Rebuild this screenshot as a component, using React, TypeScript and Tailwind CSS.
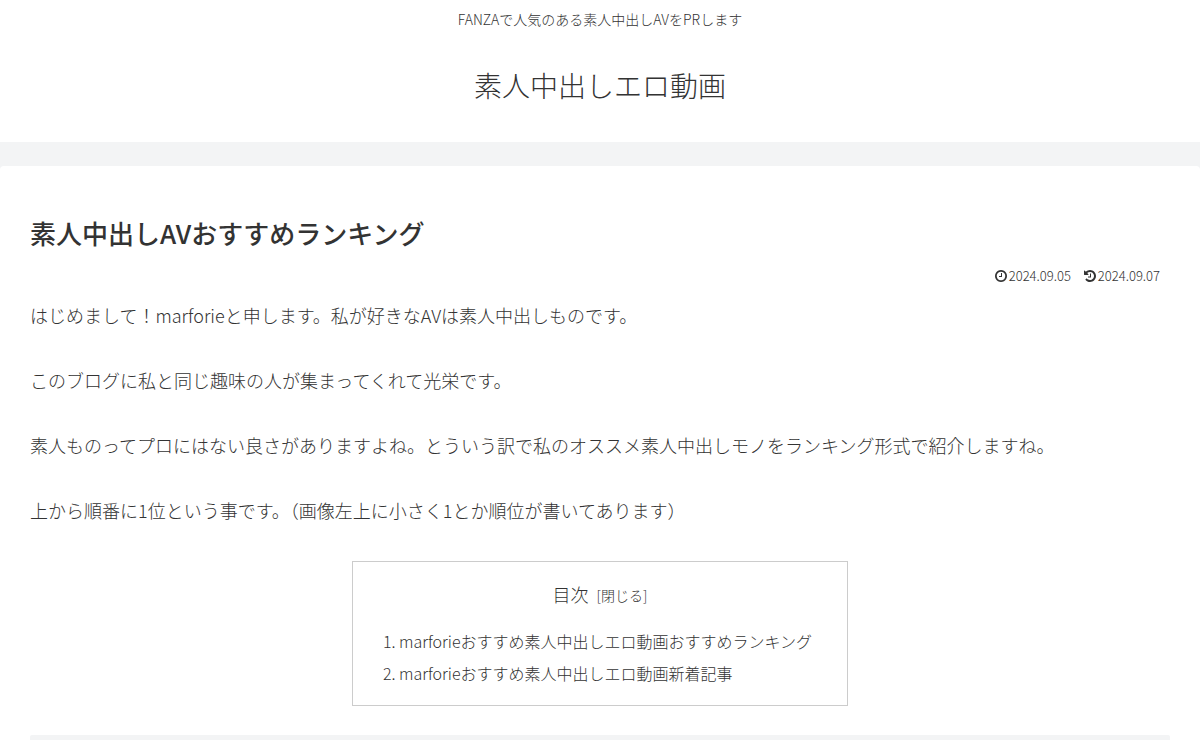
import type { ReactNode } from 'react';
import { useState } from 'react';

const paragraphs = [
  'はじめまして！marforieと申します。私が好きなAVは素人中出しものです。',
  'このブログに私と同じ趣味の人が集まってくれて光栄です。',
  '素人ものってプロにはない良さがありますよね。とういう訳で私のオススメ素人中出しモノをランキング形式で紹介しますね。',
  '上から順番に1位という事です。（画像左上に小さく1とか順位が書いてあります）',
];

const tocItems = [
  { href: '#toc1', label: 'marforieおすすめ素人中出しエロ動画おすすめランキング' },
  { href: '#toc2', label: 'marforieおすすめ素人中出しエロ動画新着記事' },
];

const Icon = ({ children }: { children: ReactNode }) => (
  <svg viewBox="0 0 1792 1792" className="size-[14px] fill-current" aria-hidden="true">
    {children}
  </svg>
);

const ClockIcon = () => (
  <Icon>
    <path d="M1024 544v448q0 14-9 23t-23 9h-320q-14 0-23-9t-9-23v-64q0-14 9-23t23-9h224v-352q0-14 9-23t23-9h64q14 0 23 9t9 23zm416 352q0-148-73-273t-198-198-273-73-273 73-198 198-73 273 73 273 198 198 273 73 273-73 198-198 73-273zm224 0q0 209-103 385.5t-279.5 279.5-385.5 103-385.5-103-279.5-279.5-103-385.5 103-385.5 279.5-279.5 385.5-103 385.5 103 279.5 279.5 103 385.5z" />
  </Icon>
);

const HistoryIcon = () => (
  <Icon>
    <path d="M1664 896q0 156-61 298t-164 245-245 164-298 61q-172 0-327-72.5t-264-204.5q-7-10-6.5-22.5t8.5-20.5l137-138q10-9 25-9 16 2 23 12 73 95 179 147t225 52q104 0 198.5-40.5t163.5-109.5 109.5-163.5 40.5-198.5-40.5-198.5-109.5-163.5-163.5-109.5-198.5-40.5q-98 0-188 35.5t-160 101.5l137 138q31 30 14 69-17 40-59 40h-448q-26 0-45-19t-19-45v-448q0-42 40-59 39-17 69 14l130 129q107-101 244.5-156.5t284.5-55.5q156 0 298 61t245 164 164 245 61 298zm-640-288v448q0 14-9 23t-23 9h-320q-14 0-23-9t-9-23v-64q0-14 9-23t23-9h224v-352q0-14 9-23t23-9h64q14 0 23 9t9 23z" />
  </Icon>
);

const Header = () => (
  <header className="bg-white pt-[7px] pb-8 text-center">
    <p className="text-sm leading-6">FANZAで人気のある素人中出しAVをPRします</p>
    <div className="mt-[29px] text-[28px] leading-[50px]">
      <a href="#top">素人中出しエロ動画</a>
    </div>
  </header>
);

const Toc = () => {
  const [open, setOpen] = useState(true);

  return (
    <nav aria-label="目次" className="mx-auto w-[496px] max-w-full border border-[#ccc] px-7 pt-4 pb-4">
      <div className="flex items-center justify-center gap-2 text-lg leading-[33px]">
        目次
        <button type="button" className="text-sm" aria-expanded={open} onClick={() => setOpen(!open)}>
          [{open ? '閉じる' : '開く'}]
        </button>
      </div>
      {open && (
        <ol className="mt-[14px] list-decimal pl-[18px] text-base leading-8">
          {tocItems.map((item) => (
            <li key={item.href}>
              <a href={item.href}>{item.label}</a>
            </li>
          ))}
        </ol>
      )}
    </nav>
  );
};

export default function App() {
  return (
    <div
      id="top"
      className="min-h-screen bg-[#f3f4f5] font-['Noto_Sans_CJK_JP',sans-serif] font-light text-[#333]"
    >
      <Header />
      <main className="mt-6 rounded-t bg-white px-[30px] pt-[47px]">
        <article>
          <h1 className="text-[26px] leading-10 font-medium">素人中出しAVおすすめランキング</h1>
          <div className="flex justify-end gap-3 pt-[13px] pr-[10px] text-[13px] leading-5">
            <span className="flex items-center gap-px">
              <ClockIcon />
              <time dateTime="2024-09-05">2024.09.05</time>
            </span>
            <span className="flex items-center gap-px">
              <HistoryIcon />
              <time dateTime="2024-09-07">2024.09.07</time>
            </span>
          </div>
          <div className="space-y-8 pt-[13px] pb-[34px] text-lg leading-[33px]">
            {paragraphs.map((text) => (
              <p key={text}>{text}</p>
            ))}
          </div>
          <Toc />
          <div id="toc1" className="mt-[29px] h-[5px] rounded-t-xs bg-[#f3f4f5]" />
        </article>
      </main>
    </div>
  );
}
